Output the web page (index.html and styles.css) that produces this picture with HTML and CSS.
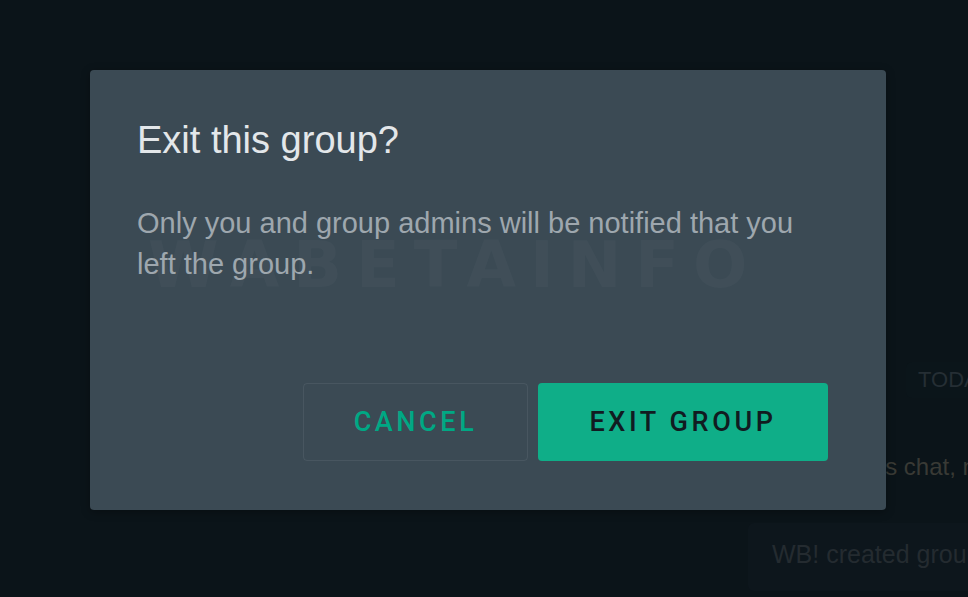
FILE: index.html
```html
<!DOCTYPE html>
<html lang="en">
<head>
    <meta charset="UTF-8">
    <meta name="viewport" content="width=device-width, initial-scale=1.0">
    <title>Exit this group?</title>
    <link rel="stylesheet" href="styles.css">
</head>
<body>
<!-- chat behind the modal -->
<div class="chat">
    <div class="day-badge">TODAY</div>
    <div class="notice">No one outside of this chat, not even WhatsApp, can read them.</div>
    <div class="system-msg">WB! created group "Test group"</div>
</div>

<div class="overlay">
    <div class="dialog" role="dialog">
        <div class="watermark">WABETAINFO</div>
        <h1 class="dialog-title">Exit this group?</h1>
        <p class="dialog-text">Only you and group admins will be notified that you left the group.</p>
        <div class="dialog-actions">
            <button class="btn btn-cancel">CANCEL</button>
            <button class="btn btn-exit">EXIT GROUP</button>
        </div>
    </div>
</div>
</body>
</html>
```

FILE: styles.css
```css
:root {
    --bg-color: #0b1419;
    --modal-color: #3b4a54;
    --green: #00a884;
    --green-bright: #0fae88;
    --title-color: #e3e7ea;
    --text-color: #9ea7ae;
    --radius: 4px;
}

body {
    margin: 0;
    height: 597px;
    overflow: hidden;
    position: relative;
    background-color: var(--bg-color);
    font-family: 'Liberation Sans', Arial, sans-serif;
}

/* background chat */
.chat {
    display: flex;
    flex-direction: column;
    align-items: flex-start;
    padding-top: 362px;
    white-space: nowrap;
}

.day-badge {
    margin-left: 906px;
    padding: 5px 12px;
    background-color: #0b151a;
    color: #252e34;
    font-size: 22px;
    border-radius: 6px;
}

.notice {
    margin-top: 55px;
    margin-left: 665px;
    color: #393a35;
    font-size: 24px;
}

.system-msg {
    margin-top: 42px;
    margin-left: 748px;
    padding: 17px 24px 22px;
    background-color: #0d161c;
    color: #242b30;
    font-size: 25px;
    border-radius: 6px;
}

/* modal */
.overlay {
    position: absolute;
    inset: 0;
    padding: 70px 0 0 90px;
}

.dialog {
    position: relative;
    width: 796px;
    height: 440px;
    box-sizing: border-box;
    padding: 47px 58px 49px 47px;
    display: flex;
    flex-direction: column;
    background-color: var(--modal-color);
    border-radius: var(--radius);
    box-shadow: 0 2px 10px rgba(0, 0, 0, 0.3);
}

.watermark {
    position: absolute;
    left: 58px;
    top: 158px;
    font-family: 'DejaVu Sans', sans-serif;
    font-weight: bold;
    font-size: 64px;
    letter-spacing: 14px;
    color: rgba(255, 255, 255, 0.028);
}

.dialog-title {
    position: relative;
    margin: 0;
    font-size: 38px;
    line-height: 46px;
    font-weight: normal;
    color: var(--title-color);
}

.dialog-text {
    position: relative;
    margin: 40px 0 0;
    max-width: 690px;
    font-size: 29px;
    line-height: 41px;
    color: var(--text-color);
}

.dialog-actions {
    margin-top: auto;
    display: flex;
    justify-content: flex-end;
    gap: 10px;
}

.btn {
    height: 78px;
    box-sizing: border-box;
    font-family: Roboto, sans-serif;
    font-weight: 500;
    font-size: 27px;
    letter-spacing: 3.6px;
    border-radius: var(--radius);
    cursor: pointer;
}

.btn-cancel {
    width: 225px;
    background-color: transparent;
    border: 1px solid rgba(255, 255, 255, 0.07);
    color: var(--green);
}

.btn-exit {
    width: 290px;
    background-color: var(--green-bright);
    border: none;
    color: #111b21;
}
```
